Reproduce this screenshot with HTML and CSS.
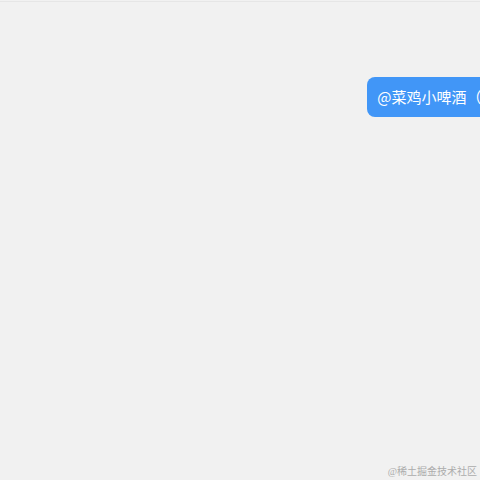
FILE: index.html
```html
<!DOCTYPE html>
<html lang="zh-CN">
<head>
<meta charset="utf-8">
<title>弹幕</title>
<link rel="stylesheet" href="styles.css">
</head>
<body>
<main class="stage">
  <div class="track">
    <div class="bullet">@菜鸡小啤酒（</div>
  </div>
</main>
<footer class="watermark">@稀土掘金技术社区</footer>
</body>
</html>
```
FILE: styles.css
```css
* {
  box-sizing: border-box;
}

body {
  margin: 0;
  min-height: 100vh;
  display: flex;
  flex-direction: column;
  background: #f1f1f1;
  overflow: hidden;
}

.stage {
  flex: 1;
  margin-top: 1px;
  padding-top: 75px;
  border-top: 1px solid #e6e6e6;
}

.track {
  display: flex;
  padding-left: 76.5%;
}

.bullet {
  flex: 1 0 auto;
  padding: 0 10px;
  border-radius: 8px 0 0 8px;
  background: #4196f7;
  color: #fff;
  font: 15px/40px "Noto Sans CJK SC", sans-serif;
  white-space: nowrap;
}

.watermark {
  padding: 0 3px 0;
  color: #acacac;
  font: 10px/16px "Liberation Serif", "Noto Sans CJK SC", serif;
  text-align: right;
}
```
